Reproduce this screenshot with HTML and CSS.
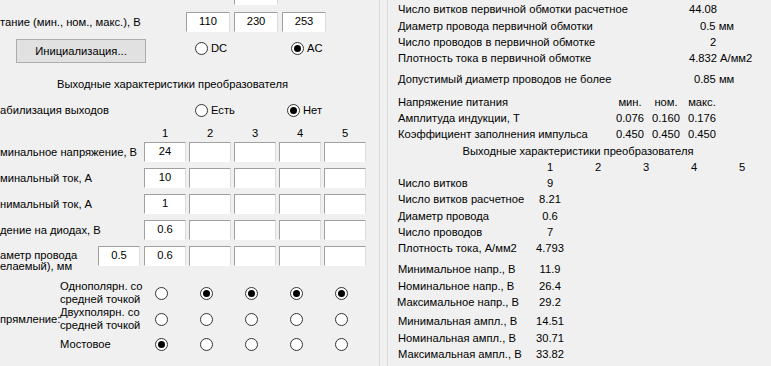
FILE: index.html
```html
<!DOCTYPE html>
<html lang="ru">
<head>
<meta charset="utf-8">
<title>Расчет трансформатора</title>
<link rel="stylesheet" href="styles.css">
</head>
<body>
<div class="app">
  <section class="left">
    <div class="stub-row"><div class="tb stub"></div></div>

    <div class="supply-row">
      <span class="supply-lbl">тание (мин., ном., макс.), В</span>
      <input class="tb tb-wide" type="text" value="110">
      <input class="tb tb-wide" type="text" value="230">
      <input class="tb tb-wide" type="text" value="253">
    </div>

    <div class="init-row">
      <div class="btn-cell"><button class="btn" type="button">Инициализация...</button></div>
      <label class="opt opt-dc"><input class="rb" type="radio" name="pwr">DC</label>
      <label class="opt"><input class="rb" type="radio" name="pwr" checked>AC</label>
    </div>

    <div class="heading-left">Выходные характеристики преобразователя</div>

    <div class="stab-row">
      <span class="stab-lbl">абилизация выходов</span>
      <label class="opt opt-est"><input class="rb" type="radio" name="stab">Есть</label>
      <label class="opt"><input class="rb" type="radio" name="stab" checked>Нет</label>
    </div>

    <div class="out-head">
      <span class="out-lbl"></span>
      <span class="num">1</span><span class="num">2</span><span class="num">3</span><span class="num">4</span><span class="num">5</span>
    </div>

    <div class="out-grid">
      <span class="out-lbl">минальное напряжение, В</span>
      <input class="tb" type="text" value="24"><input class="tb" type="text" value=""><input class="tb" type="text" value=""><input class="tb" type="text" value=""><input class="tb" type="text" value="">

      <span class="out-lbl">минальный ток, А</span>
      <input class="tb" type="text" value="10"><input class="tb" type="text" value=""><input class="tb" type="text" value=""><input class="tb" type="text" value=""><input class="tb" type="text" value="">

      <span class="out-lbl">нимальный ток, А</span>
      <input class="tb" type="text" value="1"><input class="tb" type="text" value=""><input class="tb" type="text" value=""><input class="tb" type="text" value=""><input class="tb" type="text" value="">

      <span class="out-lbl">дение на диодах, В</span>
      <input class="tb" type="text" value="0.6"><input class="tb" type="text" value=""><input class="tb" type="text" value=""><input class="tb" type="text" value=""><input class="tb" type="text" value="">

      <span class="out-lbl wire-lbl">
        <span class="wire-text">аметр провода<br>елаемый), мм</span>
        <input class="tb" type="text" value="0.5">
      </span>
      <input class="tb" type="text" value="0.6"><input class="tb" type="text" value=""><input class="tb" type="text" value=""><input class="tb" type="text" value=""><input class="tb" type="text" value="">
    </div>

    <div class="rect">
      <div class="rect-row">
        <span class="rect-cap"></span>
        <span class="rect-lbl">Однополярн. со<br>средней точкой</span>
        <span class="rc"><input class="rb" type="radio" name="r1"></span>
        <span class="rc"><input class="rb" type="radio" name="r2" checked></span>
        <span class="rc"><input class="rb" type="radio" name="r3" checked></span>
        <span class="rc"><input class="rb" type="radio" name="r4" checked></span>
        <span class="rc"><input class="rb" type="radio" name="r5" checked></span>
      </div>
      <div class="rect-row">
        <span class="rect-cap">прямление:</span>
        <span class="rect-lbl">Двухполярн. со<br>средней точкой</span>
        <span class="rc"><input class="rb" type="radio" name="r1"></span>
        <span class="rc"><input class="rb" type="radio" name="r2"></span>
        <span class="rc"><input class="rb" type="radio" name="r3"></span>
        <span class="rc"><input class="rb" type="radio" name="r4"></span>
        <span class="rc"><input class="rb" type="radio" name="r5"></span>
      </div>
      <div class="rect-row rect-last">
        <span class="rect-cap"></span>
        <span class="rect-lbl">Мостовое</span>
        <span class="rc"><input class="rb" type="radio" name="r1" checked></span>
        <span class="rc"><input class="rb" type="radio" name="r2"></span>
        <span class="rc"><input class="rb" type="radio" name="r3"></span>
        <span class="rc"><input class="rb" type="radio" name="r4"></span>
        <span class="rc"><input class="rb" type="radio" name="r5"></span>
      </div>
    </div>
  </section>

  <div class="gutter"></div>

  <section class="right">
    <div class="prim">
      <div class="pr"><span>Число витков первичной обмотки расчетное</span><span class="pv">44.08</span></div>
      <div class="pr r2"><span>Диаметр провода первичной обмотки</span><span class="pv pv-b">0.5 мм</span></div>
      <div class="pr"><span>Число проводов в первичной обмотке</span><span class="pv pv-c">2</span></div>
      <div class="pr"><span>Плотность тока в первичной обмотке</span><span class="pv">4.832 А/мм2</span></div>
      <div class="pr r5"><span>Допустимый диаметр проводов не более</span><span class="pv pv-d">0.85 мм</span></div>
    </div>

    <div class="ind">
      <span class="il">Напряжение питания</span><span>мин.</span><span>ном.</span><span>макс.</span>
      <span class="il">Амплитуда индукции, Т</span><span>0.076</span><span>0.160</span><span>0.176</span>
      <span class="il">Коэффициент заполнения импульса</span><span>0.450</span><span>0.450</span><span>0.450</span>
    </div>

    <div class="heading-right">Выходные характеристики преобразователя</div>

    <div class="res">
      <span class="rl"></span><span>1</span><span>2</span><span>3</span><span>4</span><span>5</span>
    </div>
    <div class="res">
      <span class="rl">Число витков</span><span>9</span>
    </div>
    <div class="res">
      <span class="rl">Число витков расчетное</span><span>8.21</span>
    </div>
    <div class="res g1">
      <span class="rl">Диаметр провода</span><span>0.6</span>
    </div>
    <div class="res">
      <span class="rl">Число проводов</span><span>7</span>
    </div>
    <div class="res">
      <span class="rl">Плотность тока, А/мм2</span><span>4.793</span>
    </div>
    <div class="res g5">
      <span class="rl">Минимальное напр., В</span><span>11.9</span>
    </div>
    <div class="res g1">
      <span class="rl">Номинальное напр., В</span><span>26.4</span>
    </div>
    <div class="res">
      <span class="rl shift">Максимальное напр., В</span><span>29.2</span>
    </div>
    <div class="res g3">
      <span class="rl">Минимальная ампл., В</span><span>14.51</span>
    </div>
    <div class="res g1">
      <span class="rl">Номинальная ампл., В</span><span>30.71</span>
    </div>
    <div class="res">
      <span class="rl">Максимальная ампл., В</span><span>33.82</span>
    </div>
  </section>
</div>
</body>
</html>
```

FILE: styles.css
```css
* { box-sizing: border-box; }

html, body {
  margin: 0;
  padding: 0;
  background: #f0f0f0;
}

body {
  width: 771px;
  height: 366px;
  overflow: hidden;
  font-family: "Liberation Sans", Arial, sans-serif;
  font-size: 11.2px;
  color: #000;
}

.app {
  display: flex;
  height: 366px;
}

/* ---------- left panel ---------- */
.left {
  width: 380px;
  flex: none;
  border-right: 1px solid #d9d9d9;
  overflow: hidden;
}

.gutter {
  width: 7px;
  flex: none;
}

.tb {
  display: block;
  width: 42px;
  height: 20px;
  margin: 0;
  padding: 0 0 2px;
  background: #fff;
  border: 1px solid #a0a0a0;
  border-right-color: #dcdcdc;
  border-bottom-color: #fff;
  font: 11.2px "Liberation Sans", Arial, sans-serif;
  color: #000;
  text-align: center;
  outline: none;
}

.tb-wide { width: 44px; }

.stub-row {
  height: 5px;
  padding-left: 234px;
}
.stub {
  width: 44px;
  height: 5px;
  border-top: none;
}

.supply-row {
  display: flex;
  align-items: center;
  gap: 4px;
  margin-top: 7px;
  height: 20px;
}
.supply-lbl {
  width: 182px;
  white-space: nowrap;
}

.init-row {
  display: flex;
  align-items: center;
  margin-top: 7px;
  height: 24px;
}
.btn-cell {
  width: 195px;
  padding-left: 16px;
}
.btn {
  display: block;
  width: 130px;
  height: 24px;
  margin: 0;
  padding: 0;
  background: #e1e1e1;
  border: 1px solid #adadad;
  font: 11.2px "Liberation Sans", Arial, sans-serif;
  color: #000;
}
.init-row .opt { margin-top: -6px; }

.opt {
  display: flex;
  align-items: center;
  gap: 3px;
  white-space: nowrap;
}
.opt-dc { width: 96px; }
.opt-est { width: 92px; }

.rb {
  appearance: none;
  -webkit-appearance: none;
  display: block;
  flex: none;
  width: 13px;
  height: 13px;
  margin: 0;
  border: 1px solid #333;
  border-radius: 50%;
  background: #fff;
  position: relative;
}
.rb:checked::after {
  content: "";
  position: absolute;
  left: 2px;
  top: 2px;
  width: 7px;
  height: 7px;
  border-radius: 50%;
  background: #000;
}

.heading-left {
  margin-top: 13px;
  padding-left: 57px;
  line-height: 16px;
  white-space: nowrap;
}

.stab-row {
  display: flex;
  align-items: center;
  margin-top: 10px;
  height: 16px;
}
.stab-lbl { width: 195px; white-space: nowrap; }

.out-head {
  display: grid;
  grid-template-columns: 141px repeat(5, 42px);
  column-gap: 3px;
  margin-top: 7px;
  height: 16px;
  line-height: 16px;
}
.num { text-align: center; }

.out-grid {
  display: grid;
  grid-template-columns: 141px repeat(5, 42px);
  grid-auto-rows: 20px;
  column-gap: 3px;
  row-gap: 6px;
  margin-top: 1px;
  align-items: center;
}
.out-lbl { white-space: nowrap; }

.wire-lbl {
  display: flex;
  align-self: stretch;
  justify-content: space-between;
  padding-right: 1px;
}
.wire-text {
  line-height: 11px;
  padding-top: 4px;
}

.rect {
  margin-top: 14px;
}
.rect-row {
  display: grid;
  grid-template-columns: 60px 79px repeat(5, 45px);
  align-items: center;
  height: 26px;
  line-height: 13px;
  white-space: nowrap;
}
.rect-last {
  height: 13px;
  margin-top: 6px;
}
.rc {
  display: flex;
  justify-content: center;
}

/* ---------- right panel ---------- */
.right {
  flex: 1;
  border-left: 1px solid #d9d9d9;
  padding-left: 10px;
  line-height: 16px;
  white-space: nowrap;
}

.prim { padding-top: 1px; }
.pr {
  display: grid;
  grid-template-columns: 291px auto;
}
.r2 { margin-top: 1px; }
.r5 { margin-top: 5px; }
.pv-b { padding-left: 11px; }
.pv-c { padding-left: 21px; }
.pv-d { padding-left: 5px; }

.ind {
  display: grid;
  grid-template-columns: 214px repeat(3, 36px);
  margin-top: 7px;
  text-align: center;
}
.il { text-align: left; }

.heading-right {
  width: 360px;
  margin-top: 2px;
  line-height: 15px;
  text-align: center;
}

.res {
  display: grid;
  grid-template-columns: 128px repeat(5, 48px);
  text-align: center;
}
.rl { text-align: left; }
.shift { margin-left: -1px; }
.g1 { margin-top: 1px; }
.g3 { margin-top: 3px; }
.g5 { margin-top: 5px; }
```
